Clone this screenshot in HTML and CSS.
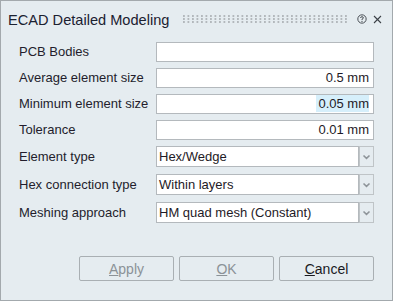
FILE: index.html
```html
<!DOCTYPE html>
<html>
<head>
<meta charset="utf-8">
<link rel="stylesheet" href="styles.css">
</head>
<body>
<div class="dialog">
  <div class="titlebar">
    <span class="title">ECAD Detailed Modeling</span>
    <span class="grip"></span>
    <svg class="help" width="10" height="10" viewBox="0 0 10 10">
      <circle cx="5" cy="5" r="4.2" fill="none" stroke="#4a4f55" stroke-width="1"/>
      <path d="M3.6 4 Q3.6 2.7 5 2.7 Q6.4 2.7 6.4 3.9 Q6.4 4.7 5 5.2 L5 6" fill="none" stroke="#4a4f55" stroke-width="1"/>
      <circle cx="5" cy="7.4" r="0.6" fill="#4a4f55"/>
    </svg>
    <svg class="close" width="9" height="9" viewBox="0 0 9 9">
      <path d="M1 1 L8 8 M8 1 L1 8" stroke="#3c4147" stroke-width="1.1"/>
    </svg>
  </div>
  <div class="form">
    <label class="lbl">PCB Bodies</label>
    <div class="field"></div>
    <label class="lbl">Average element size</label>
    <div class="field num">0.5 mm</div>
    <label class="lbl">Minimum element size</label>
    <div class="field num"><span class="sel">0.05 mm</span></div>
    <label class="lbl">Tolerance</label>
    <div class="field num">0.01 mm</div>
    <label class="lbl tall">Element type</label>
    <div class="combo"><div class="cval">Hex/Wedge</div><div class="carrow"><svg width="9" height="6" viewBox="0 0 9 6"><path d="M1.5 1.5 L4.5 4.3 L7.5 1.5" fill="none" stroke="#8e9499" stroke-width="1.6"/></svg></div></div>
    <label class="lbl tall">Hex connection type</label>
    <div class="combo"><div class="cval">Within layers</div><div class="carrow"><svg width="9" height="6" viewBox="0 0 9 6"><path d="M1.5 1.5 L4.5 4.3 L7.5 1.5" fill="none" stroke="#8e9499" stroke-width="1.6"/></svg></div></div>
    <label class="lbl tall">Meshing approach</label>
    <div class="combo"><div class="cval">HM quad mesh (Constant)</div><div class="carrow"><svg width="9" height="6" viewBox="0 0 9 6"><path d="M1.5 1.5 L4.5 4.3 L7.5 1.5" fill="none" stroke="#8e9499" stroke-width="1.6"/></svg></div></div>
  </div>
  <div class="buttons">
    <button class="btn disabled"><u>A</u>pply</button>
    <button class="btn disabled"><u>O</u>K</button>
    <button class="btn"><u>C</u>ancel</button>
  </div>
</div>
</body>
</html>
```
FILE: styles.css
```css
html, body {
  margin: 0;
  padding: 0;
  background: #e5ecf0;
}
.dialog {
  box-sizing: border-box;
  width: 393px;
  height: 301px;
  border: 1px solid #a3a9ad;
  background: #e5ecf0;
  font-family: "Liberation Sans", Arial, sans-serif;
  color: #231d2c;
  display: flex;
  flex-direction: column;
}
.titlebar {
  height: 35px;
  display: flex;
  align-items: center;
  padding-left: 7px;
  padding-right: 10px;
  box-sizing: border-box;
}
.title {
  font-size: 14.6px;
  color: #1b2130;
  white-space: nowrap;
  margin-top: 2px;
}
.grip {
  margin-left: 14px;
  width: 166px;
  height: 9px;
  margin-top: 1px;
  background-image: radial-gradient(circle at 1px 1px, #b3b8bc 0.8px, transparent 1.1px);
  background-size: 4.5px 3px;
}
.help {
  margin-left: 8px;
  margin-top: 1px;
}
.close {
  margin-left: 6px;
  margin-top: 1px;
}
.form {
  margin-top: 6px;
  padding: 0 18px 0 18px;
  display: grid;
  grid-template-columns: 137px 1fr;
  row-gap: 6px;
  font-size: 13px;
}
.lbl {
  height: 20px;
  line-height: 20px;
  white-space: nowrap;
}
.lbl.tall {
  height: 22px;
  line-height: 21px;
}
.field {
  box-sizing: border-box;
  height: 20px;
  border: 1px solid #b4b9bd;
  background: #fff;
  line-height: 18px;
  padding: 0 4px;
  color: #1e1a26;
}
.field.num {
  text-align: right;
}
.sel {
  background: #d6effb;
  padding: 1px 0 1px 2px;
}
.combo {
  height: 22px;
  display: flex;
}
.cval {
  box-sizing: border-box;
  width: 203px;
  height: 21px;
  border: 1px solid #b4b9bd;
  background: #fff;
  line-height: 19px;
  padding: 0 2px;
  color: #1e1a26;
}
.carrow {
  box-sizing: border-box;
  width: 15px;
  height: 21px;
  border: 1px solid #bfc4c7;
  background: #e5ecf0;
  display: flex;
  align-items: center;
  justify-content: center;
}
.buttons {
  margin-top: 32px;
  display: flex;
  justify-content: flex-end;
  gap: 5px;
  padding-right: 18px;
}
.btn {
  box-sizing: border-box;
  width: 95px;
  height: 25px;
  border: 1px solid #a9afb3;
  border-radius: 2px;
  background: #e5ecf0;
  font-family: "Liberation Sans", Arial, sans-serif;
  font-size: 14px;
  color: #1a1a1f;
  padding: 0;
}
.btn.disabled {
  color: #8b9297;
}
```
